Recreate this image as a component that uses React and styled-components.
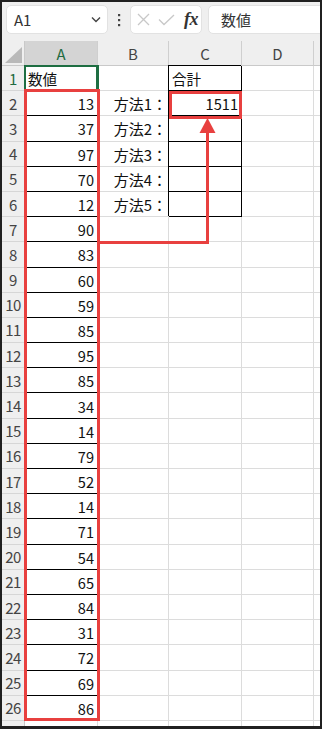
import React from 'react'
import styled, {createGlobalStyle, css} from 'styled-components'

const GlobalStyle = createGlobalStyle`
  html, body {
    margin: 0;
    padding: 0;
    background: #202020;
  }
  body {
    font-family: "Noto Sans CJK JP", "Noto Sans", sans-serif;
    overflow: hidden;
  }
`

const Frame = styled.div`
  position: relative;
  width: 322px;
  height: 729px;
  box-sizing: border-box;
  border: 2px solid #202020;
  border-bottom-width: 3px;
  background: #fff;
  overflow: hidden;
`

const FormulaBar = styled.div`
  height: 39px;
  box-sizing: border-box;
  background: #efefef;
  display: flex;
  align-items: flex-start;
  padding: 3px 0 0 4px;
  gap: 4px;
`

const Box = styled.div`
  height: 29px;
  box-sizing: border-box;
  background: #fff;
  border: 1px solid #e2e2e2;
  border-radius: 5px;
  display: flex;
  align-items: center;
  width: ${p => p.$w};
  padding: ${p => p.$pad || '0'};
  gap: ${p => p.$gap || '0'};
  flex: ${p => p.$grow ? '1 0 auto' : 'none'};
  margin-left: ${p => p.$grow ? '2px' : '0'};
  margin-right: ${p => p.$grow ? '-20px' : '0'};
`

const BoxText = styled.span`
  font-size: 15px;
  color: #333;
  flex: 1;
  line-height: 1;
`

const Dots = styled.div`
  width: 14px;
  height: 29px;
  display: flex;
  align-items: center;
  justify-content: center;
`

const Fx = styled.span`
  font-family: "Liberation Serif", serif;
  font-style: italic;
  font-weight: bold;
  font-size: 18px;
  color: #333;
  letter-spacing: -0.5px;
  margin-left: 1px;
`

const Grid = styled.div`
  display: grid;
  grid-template-columns: 23px 73px 71px 73px 72px 1fr;
  grid-template-rows: 25px;
  grid-auto-rows: 25.2px;
`

const Corner = styled.div`
  background: #efefef;
  border-right: 1px solid #c9c9c9;
  border-bottom: 1px solid #c9c9c9;
  box-sizing: border-box;
  display: flex;
  align-items: flex-end;
  justify-content: flex-end;
  padding: 0 2px 2px 0;
`

const ColHead = styled.div`
  box-sizing: border-box;
  background: ${p => p.$active ? '#d4d4d4' : '#efefef'};
  color: ${p => p.$active ? '#1f6b41' : '#444'};
  border-right: 1px solid #cfcfcf;
  border-bottom: 1px solid #c9c9c9;
  display: flex;
  align-items: center;
  justify-content: center;
  font-size: 15px;
`

const RowHead = styled.div`
  box-sizing: border-box;
  background: #efefef;
  color: ${p => p.$active ? '#1f6b41' : '#444'};
  border-right: 1px solid #c9c9c9;
  border-bottom: 1px solid #d6d6d6;
  display: flex;
  align-items: center;
  justify-content: center;
  font-size: 15px;
  letter-spacing: -0.5px;
  overflow: hidden;
`

const Cell = styled.div`
  box-sizing: border-box;
  border-right: 1px solid #dcdcdc;
  border-bottom: 1px solid #dcdcdc;
  display: flex;
  align-items: center;
  justify-content: ${p => p.$right ? 'flex-end' : 'flex-start'};
  padding: 1px 3px 0 3px;
  font-size: 14.6px;
  color: #111;
  white-space: nowrap;
  overflow: visible;
  ${p => p.$boxed && css`
    border-right-color: #000;
    border-bottom-color: #000;
    box-shadow: -1px -1px 0 0 #000;
  `}
  ${p => p.$selected && css`
    box-shadow: 0 0 0 1px #1e6e42, inset 0 0 0 1px #1e6e42;
    border-color: #1e6e42;
  `}
  ${p => p.$label && css`
    padding-right: 1px;
    font-size: 15px;
  `}
`

const Overlay = styled.svg`
  position: absolute;
  left: -2px;
  top: -2px;
  width: 322px;
  height: 729px;
  pointer-events: none;
`

const values = [13, 37, 97, 70, 12, 90, 83, 60, 59, 85, 95, 85, 34, 14, 79, 52, 14, 71, 54, 65, 84, 31, 72, 69, 86]

const Row = ({n}) => {
  const a = n === 1 ? '数値' : values[n - 2]
  const hasB = n >= 2 && n <= 6
  const cBoxed = n <= 6
  let c = ''
  if (n === 1) c = '合計'
  if (n === 2) c = '1511'
  return (
    <>
      <RowHead $active={n === 1}>{n}</RowHead>
      <Cell $right={n > 1} $boxed={n > 1 && n <= 26} $selected={n === 1}>{n <= 26 ? a : ''}</Cell>
      <Cell $right $label>{hasB ? `方法${n - 1}：` : ''}</Cell>
      <Cell $right={n > 1} $boxed={cBoxed}>{c}</Cell>
      <Cell />
      <Cell />
    </>
  )
}

export default function App() {
  const rows = Array.from({length: 27}, (_, i) => i + 1)
  return (
    <>
      <GlobalStyle />
      <Frame>
        <FormulaBar>
          <Box $w="102px" $pad="0 6px 0 7px">
            <BoxText>A1</BoxText>
            <svg width="10" height="7" viewBox="0 0 10 7">
              <polyline points="1,1.5 5,5.5 9,1.5" fill="none" stroke="#444" strokeWidth="1.4" />
            </svg>
          </Box>
          <Dots>
            <svg width="4" height="14" viewBox="0 0 4 14">
              <rect x="1" y="1" width="2.2" height="2.2" fill="#444" />
              <rect x="1" y="6" width="2.2" height="2.2" fill="#444" />
              <rect x="1" y="11" width="2.2" height="2.2" fill="#444" />
            </svg>
          </Dots>
          <Box $w="72px" $pad="0 0 0 6px" $gap="8px">
            <svg width="13" height="13" viewBox="0 0 13 13">
              <path d="M1 1 L12 12 M12 1 L1 12" stroke="#c8c8c8" strokeWidth="1.3" />
            </svg>
            <svg width="17" height="12" viewBox="0 0 17 12">
              <polyline points="1,5.5 6,10.5 16,1" fill="none" stroke="#c8c8c8" strokeWidth="1.3" />
            </svg>
            <Fx>fx</Fx>
          </Box>
          <Box $grow $pad="0 0 0 12px">
            <BoxText>数値</BoxText>
          </Box>
        </FormulaBar>
        <Grid>
          <Corner>
            <svg width="17" height="16" viewBox="0 0 17 16">
              <polygon points="17,0 17,16 0,16" fill="#b9b9b9" />
            </svg>
          </Corner>
          <ColHead $active>A</ColHead>
          <ColHead>B</ColHead>
          <ColHead>C</ColHead>
          <ColHead>D</ColHead>
          <ColHead />
          {rows.map(n => <Row key={n} n={n} />)}
        </Grid>
        <Overlay viewBox="0 0 322 729">
          <rect x="25.5" y="90.5" width="73" height="629" fill="none" stroke="#e8403f" strokeWidth="3" />
          <rect x="170.5" y="92.5" width="70" height="25" fill="none" stroke="#e8403f" strokeWidth="3" />
          <polyline points="100,242.5 207.5,242.5 207.5,131" fill="none" stroke="#e8403f" strokeWidth="3" />
          <polygon points="207.5,118 199.5,133 215.5,133" fill="#e8403f" />
        </Overlay>
      </Frame>
    </>
  )
}
